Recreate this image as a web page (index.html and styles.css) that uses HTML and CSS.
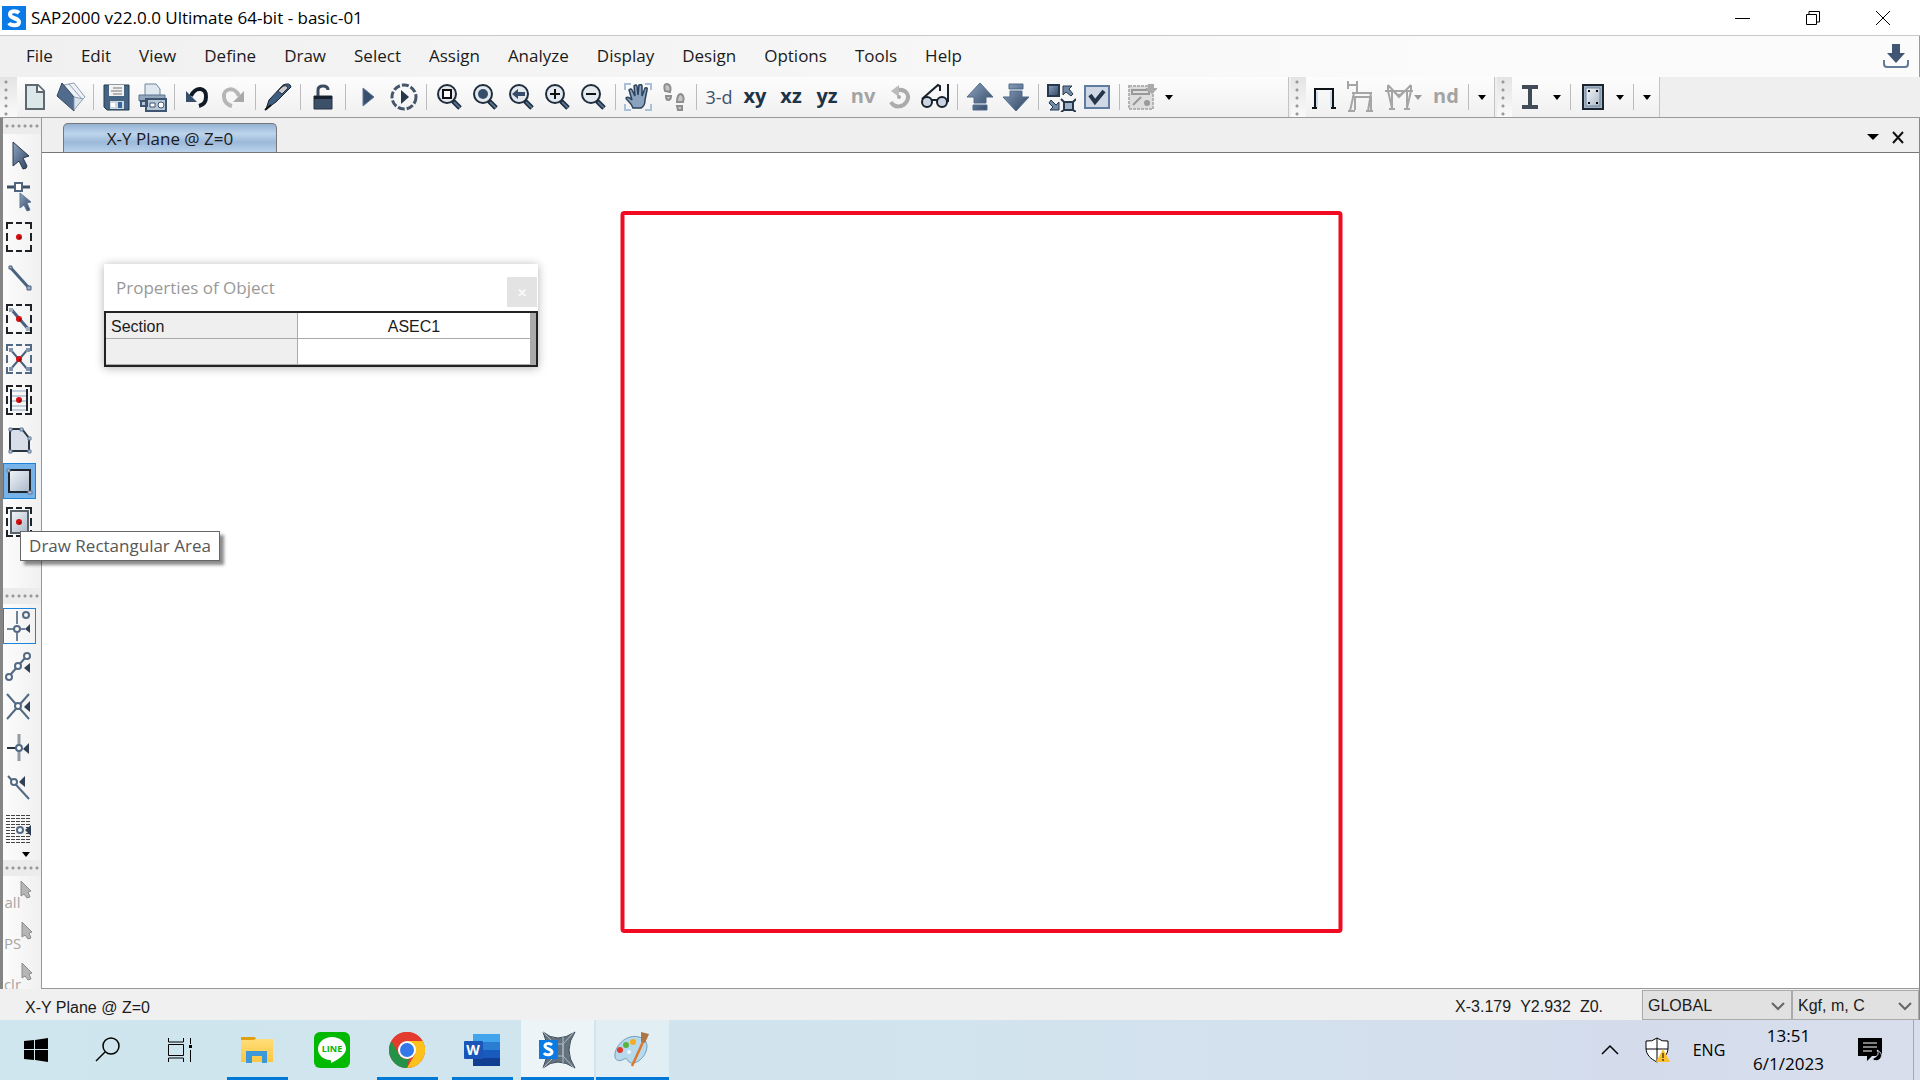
FILE: index.html
```
<!DOCTYPE html>
<html lang="en">
<head>
<meta charset="UTF-8">
<meta name="viewport" content="width=device-width, initial-scale=1.0">
<title>SAP2000 v22.0.0 Ultimate 64-bit - basic-01</title>
<link rel="stylesheet" href="styles.css">
</head>
<body>
<!-- shared shapes -->
<svg class="defs" aria-hidden="true">
    <defs>
        <linearGradient id="steel" x1="0" y1="0" x2="1" y2="1">
            <stop offset="0" stop-color="#8fa5c0"/><stop offset="1" stop-color="#2d4260"/>
        </linearGradient>
        <linearGradient id="pale" x1="0" y1="0" x2="1" y2="1">
            <stop offset="0" stop-color="#f3f6f9"/><stop offset="1" stop-color="#a9b7c9"/>
        </linearGradient>
        <linearGradient id="folder" x1="0" y1="0" x2="0" y2="1">
            <stop offset="0" stop-color="#ffdd78"/><stop offset="1" stop-color="#fbc740"/>
        </linearGradient>
    </defs>
    <symbol id="lens" viewBox="0 0 28 28">
        <path d="M18 18l7 7" stroke="#1b2a3c" stroke-width="5"/>
        <path d="M19 19l6 6" stroke="#56708f" stroke-width="2"/>
        <circle cx="12" cy="11" r="9" fill="#e3e9ef" stroke="#1f2c3c" stroke-width="2"/>
    </symbol>
    <symbol id="dashbox" viewBox="0 0 28 32">
        <path d="M2 8V2h6M11 2h6M20 2h6v6M26 12v8M26 24v6h-6M17 30h-6M8 30H2v-6M2 20v-8" fill="none" stroke="currentColor" stroke-width="2"/>
    </symbol>
    <symbol id="dot" viewBox="0 0 8 8">
        <circle cx="4" cy="4" r="3" fill="#d40d10"/><circle cx="5" cy="5" r="1" fill="#7d0000"/>
    </symbol>
    <symbol id="pick" viewBox="0 0 12 20">
        <path d="M1 1v15l3-2 3 4 3-1-2-5 3-1z" fill="#b5b5b5" stroke="#8c8c8c" stroke-width="1"/>
    </symbol>
</svg>

<header class="titlebar">
    <svg class="app-icon" viewBox="0 0 24 24"><rect width="24" height="24" fill="#0a7ae6"/><path d="M17 7C15 5 8 4 8 8.500S17 11.500 17 16 9 20 7 17" fill="none" stroke="#fff" stroke-width="4"/></svg>
    <h1>SAP2000 v22.0.0 Ultimate 64-bit - basic-01</h1>
    <div class="window-buttons">
        <button aria-label="Minimize"><svg width="16" height="16"><path d="M0 8.500h15" stroke="#000"/></svg></button>
        <button aria-label="Restore"><svg width="16" height="16" fill="none" stroke="#000"><path d="M1.500 4.500h10v10h-10zM4 4V1.500h10.500V12H12"/></svg></button>
        <button aria-label="Close"><svg width="16" height="16"><path d="M1 1l14 14M15 1L1 15" stroke="#000"/></svg></button>
    </div>
</header>

<nav class="menubar">
    <button>File</button>
    <button>Edit</button>
    <button>View</button>
    <button>Define</button>
    <button>Draw</button>
    <button>Select</button>
    <button>Assign</button>
    <button>Analyze</button>
    <button>Display</button>
    <button>Design</button>
    <button>Options</button>
    <button>Tools</button>
    <button>Help</button>
    <button class="download" aria-label="Download"><svg width="28" height="28"><path d="M10 2h8v9h5l-9 10-9-10h5z" fill="#405672"/><path d="M2 18v4q0 3 3 3h18q3 0 3-3v-4" fill="none" stroke="#627a98" stroke-width="2"/></svg></button>
</nav>

<div class="toolbars">
    <div class="toolbar main-tools">
        <span class="grip"></span>
        <button aria-label="New"><svg width="28" height="28"><path d="M5 2h12l6 6v18H5z" fill="#dce7e9" stroke="#5d6971" stroke-width="2"/><path d="M16 2v7h7" fill="#fff" stroke="#5d6971" stroke-width="2"/></svg></button>
        <button aria-label="Open"><svg width="30" height="30"><path d="M8 3l10-2 11 14-11 10z" fill="#eef2f6" stroke="#8e9fb3"/><path d="M13 2l13 15-9 8" fill="none" stroke="#8e9fb3"/><path d="M1 14L6 1l12 14v14z" fill="#506b8c" stroke="#33475f"/><path d="M18 15l9 2-9 11z" fill="#dbe3ec" stroke="#8e9fb3"/></svg></button>
        <span class="sep"></span>
        <button aria-label="Save"><svg width="28" height="28"><path d="M2 2h25v25H5l-3-3z" fill="#456484" stroke="#253a50"/><path d="M7 2h15v11H7z" fill="#f2f2f2"/><path d="M11 5h9M9 8h11M11 11h9" stroke="#777"/><path d="M8 18h14v8H8z" fill="#ced6de"/><path d="M16 19h4v6h-4z" fill="#38669a"/><path d="M9 20h4v4H9z" fill="#fff"/></svg></button>
        <button aria-label="Print"><svg width="30" height="30"><path d="M8 2h11l4 5v7H8z" fill="#dfe8f1" stroke="#70859e"/><path d="M2 13h26v6H2z" fill="#92a6bd" stroke="#5d738e"/><path d="M4 19h6v5H4zM9 17h20v12H9z" fill="#b7c6d5" stroke="#3d5570" stroke-width="2"/><path d="M13 21h5v4h-5z" fill="#fff" stroke="#3d5570"/><circle cx="24" cy="23" r="3" fill="#fff" stroke="#3d5570"/></svg></button>
        <span class="sep"></span>
        <button aria-label="Undo"><svg width="28" height="28"><path d="M8 13C12 3 24 4 23 14c0 5-3 8-7 9" fill="none" stroke="#101a26" stroke-width="4"/><path d="M3 8v11h11z" fill="#36506c"/></svg></button>
        <button aria-label="Redo" disabled><svg width="28" height="28"><path d="M20 13C16 3 4 5 5 14c0 5 4 8 8 9" fill="none" stroke="#b6b6b6" stroke-width="4"/><path d="M25 8v11H14z" fill="#a9a9a9"/></svg></button>
        <span class="sep"></span>
        <button aria-label="Refresh Window"><svg width="30" height="30"><path d="M3 27l3-9L20 3q7-3 8 2L13 20z" fill="#3f5d80" stroke="#182536"/><path d="M19 5q4-3 6 1l-6 6-4-3z" fill="#c9cdd3" stroke="#333"/><path d="M2 28l6-5" stroke="#111" stroke-width="2"/></svg></button>
        <span class="sep"></span>
        <button aria-label="Unlock Model"><svg width="28" height="28"><path d="M9 14V7q0-4 5-4t5 4" fill="none" stroke="#3c4c5f" stroke-width="3"/><path d="M5 13h18v13H5z" fill="#3c5069" stroke="#233143"/><path d="M5 13h18v3H5z" fill="#16212f"/></svg></button>
        <span class="sep"></span>
        <button aria-label="Run Analysis"><svg width="28" height="28"><path d="M9 5l11 9-11 9z" fill="#38506d" stroke="#5d7896"/></svg></button>
        <button aria-label="Run Options"><svg width="30" height="30"><circle cx="15" cy="15" r="12" fill="none" stroke="#46566a" stroke-width="3" stroke-dasharray="7 2"/><path d="M12 8l8 7-8 7z" fill="#26374c"/></svg></button>
        <span class="sep"></span>
        <button aria-label="Rubber Band Zoom"><svg width="28" height="28"><use href="#lens"/><path d="M8 7h8v8H8z" fill="#fff" stroke="#111" stroke-width="2"/></svg></button>
        <button aria-label="Restore Full View"><svg width="28" height="28"><use href="#lens"/><circle cx="12" cy="11" r="5" fill="#364e6b"/></svg></button>
        <button aria-label="Previous Zoom"><svg width="28" height="28"><use href="#lens"/><path d="M5 11l6-5v3h7v4h-7v3z" fill="#364e6b"/></svg></button>
        <button aria-label="Zoom In"><svg width="28" height="28"><use href="#lens"/><path d="M7 11h10M12 6v10" stroke="#111" stroke-width="2"/></svg></button>
        <button aria-label="Zoom Out"><svg width="28" height="28"><use href="#lens"/><path d="M7 11h10" stroke="#111" stroke-width="2"/></svg></button>
        <span class="sep"></span>
        <button aria-label="Pan"><svg width="30" height="30"><path d="M2 8V2h6M22 2h6v6M28 22v6h-6M8 28H2v-6" fill="none" stroke="#a9bfda" stroke-width="2"/><path d="M10 26C8 20 3 18 3 16q2-2 6 2L6 8q2-2 3 0l3 6-1-10q2-2 3 0l1 9 1-10q3-1 3 1v10l3-8q3-1 2 2l-2 10q0 6-4 8z" fill="#8ba2bf" stroke="#2d425c" stroke-width="1.500"/></svg></button>
        <button aria-label="Walk" disabled><svg width="28" height="30" fill="#c5c5c5" stroke="#8e8e8e" stroke-width="2"><path d="M5 9q-2-7 2-7 5 1 3 8zM6 14h5q0 4-3 4-2 0-2-4zM17 20q0-8 4-8 4 2 2 8zM17 24h5v4h-4z"/></svg></button>
        <span class="sep"></span>
        <button class="glyph thin">3-d</button>
        <button class="glyph">xy</button>
        <button class="glyph">xz</button>
        <button class="glyph">yz</button>
        <button class="glyph" disabled>nv</button>
        <button aria-label="Rotate 3D View" disabled><svg width="28" height="28"><path d="M13 7c8-1 12 5 9 11C18 25 9 25 6 19" fill="none" stroke="#ababab" stroke-width="4"/><path d="M6 8l8-6v12z" fill="#bbb"/><circle cx="14" cy="14" r="2" fill="#aaa"/></svg></button>
        <button aria-label="Perspective Toggle"><svg width="32" height="30" fill="none" stroke="#17202b" stroke-width="2"><path d="M3 17L19 3l2 1v5M29 2v18M13 18h5"/><circle cx="8" cy="20" r="5" fill="#c9d5e2"/><circle cx="23" cy="20" r="5" fill="#c9d5e2"/></svg></button>
        <span class="sep"></span>
        <button aria-label="Up One Gridline"><svg width="30" height="30" fill="url(#steel)" stroke="#506b8c"><path d="M15 1l13 14h-7v6H9v-6H2zM8 23h14v5H8z"/></svg></button>
        <button aria-label="Down One Gridline"><svg width="30" height="30" fill="url(#steel)" stroke="#506b8c"><path d="M15 29L2 15h7V9h12v6h7zM8 2h14v5H8z"/></svg></button>
        <span class="sep"></span>
        <button aria-label="Object Shrink Toggle"><svg width="30" height="30"><path d="M2 3h11v11H2z" fill="url(#steel)" stroke="#26384e" stroke-width="2"/><path d="M17 4h9l-3 3 4 5-2 2-5-4-3 3zM13 28H4l3-3-4-4 2-3 5 5 3-3z" fill="#7189a5" stroke="#26384e"/><path d="M18 20h9v8h-9z" fill="#9db1c8" stroke="#26384e" stroke-width="2"/><path d="M15 17l3 3M30 17l-3 3M15 30l3-2M30 30l-3-2" stroke="#26384e" stroke-width="2"/></svg></button>
        <button aria-label="Set Display Options"><svg width="28" height="28"><path d="M2 3h24v22H2z" fill="#cfd8e4" stroke="#5f7da1" stroke-width="2"/><path d="M7 12l5 7L21 8" fill="none" stroke="#25364a" stroke-width="4"/></svg></button>
        <span class="sep"></span>
        <button aria-label="Named Display" disabled><svg width="30" height="30"><path d="M2 4h24v23H2z" fill="#ddd" stroke="#b3b3b3" stroke-width="2" stroke-dasharray="3 1"/><path d="M5 8h17v4H5zM6 23l8-8" fill="none" stroke="#999" stroke-width="2"/><circle cx="20" cy="21" r="3" fill="#999"/><path d="M21 2h6v4h4l-6 6-7-6h3z" fill="#aaa"/></svg></button>
        <button class="drop" aria-label="More named displays"></button>
    </div>

    <div class="toolbar">
        <span class="grip"></span>
        <button aria-label="Frame"><svg width="30" height="28"><path d="M6 25V6h18v19M3 25h5M22 25h5" fill="none" stroke="#0d1218" stroke-width="2"/><path d="M8 8v16M22 8v16" stroke="#a9c3e0"/></svg></button>
        <button aria-label="Frame Loads" disabled><svg width="30" height="34" fill="none" stroke="#a5a5a5" stroke-width="2"><path d="M3 1v8M12 1v8M3 5h9M7 13h20M7 17h20M9 13L5 31M10 17v13M26 13l-3 18M26 17v14M3 31h7M21 31h7M12 9v4"/></svg></button>
        <button class="wide" aria-label="Frame Forces" disabled><svg width="30" height="28" fill="none" stroke="#a5a5a5" stroke-width="2"><path d="M1 8h28M4 2l11 12L27 2M4 2v6l4 17M8 8v17M27 2v6l-4 17M23 8v17M5 26h6M20 26h6M11 9q4 6 8 0"/></svg><i class="caret grey"></i></button>
        <button class="glyph" disabled>nd</button>
        <span class="sep"></span>
        <button class="drop" aria-label="More display tools"></button>
    </div>

    <div class="toolbar">
        <span class="grip"></span>
        <button aria-label="Steel Frame Design"><svg width="24" height="28"><path d="M4 2h16v4h-6v16h6v4H4v-4h6V6H4z" fill="#414c58"/></svg></button>
        <button class="drop" aria-label="More steel design"></button>
        <span class="sep"></span>
        <button aria-label="Concrete Frame Design"><svg width="26" height="28"><path d="M3 2h20v24H3z" fill="#a3b3c7" stroke="#1c242d" stroke-width="2"/><path d="M6 5h14v18H6z" fill="url(#pale)" stroke="#71839a"/><path d="M8 7h2v2H8zM16 7h2v2h-2zM8 19h2v2H8zM16 19h2v2h-2z"/></svg></button>
        <button class="drop" aria-label="More concrete design"></button>
        <span class="sep"></span>
        <button class="drop" aria-label="Toolbar options"></button>
    </div>
</div>

<main class="workspace">
    <aside class="side-tools">
        <div class="group draw-group">
            <span class="hgrip"></span>
            <div class="cells">
                <button aria-label="Select Object"><svg width="28" height="32"><path d="M8 2v24l6-5 4 8q4 0 4-3l-4-8 6-2z" fill="url(#steel)" stroke="#28384c"/></svg></button>
                <button aria-label="Reshape Object"><svg width="28" height="32"><path d="M2 6h23" stroke="#3d5067" stroke-width="3"/><path d="M10 2h7v8h-7z" fill="#fff" stroke="#506580" stroke-width="2"/><path d="M15 12v15l4-3 3 6 3-1-3-7 4-1z" fill="url(#steel)" stroke="#607994"/></svg></button>
                <button aria-label="Draw Special Joint"><svg width="28" height="32"><use href="#dashbox"/><use href="#dot" x="10" y="12" width="8" height="8"/></svg></button>
                <button aria-label="Draw Frame"><svg width="28" height="32"><path d="M5 5l19 21" stroke="#4a6280" stroke-width="3"/><path d="M4 4h3v3H4zM22 24h4v4h-4z" fill="#9eafc2" stroke="#4a6280"/></svg></button>
                <button aria-label="Quick Draw Frame"><svg width="28" height="32"><use href="#dashbox"/><path d="M6 6l18 21" stroke="#4a6280" stroke-width="3"/><path d="M4 5h4v4H4zM21 24h4v4h-4z" fill="#9eafc2"/><use href="#dot" x="10" y="12" width="8" height="8"/></svg></button>
                <button class="blue" aria-label="Quick Draw Braces"><svg width="28" height="32"><use href="#dashbox"/><path d="M5 6l18 21M23 6L5 27" stroke="#4a6280" stroke-width="2"/><path d="M4 5h4v4H4zM21 5h4v4h-4zM4 24h4v4H4zM21 24h4v4h-4z" fill="#7f94ad"/><use href="#dot" x="10" y="12" width="8" height="8"/></svg></button>
                <button aria-label="Quick Draw Secondary Beams"><svg width="28" height="32"><use href="#dashbox"/><path d="M7 7h14M7 12h14M7 17h14M7 22h14M7 26h14" stroke="#8aa3c2"/><path d="M6 5v22M22 5v22" stroke="#1b232c" stroke-width="2"/><use href="#dot" x="10" y="12" width="8" height="8"/></svg></button>
                <button aria-label="Draw Poly Area"><svg width="28" height="32"><path d="M5 5h12l7 9v13H5z" fill="#d8dfe9" stroke="#2a3542" stroke-width="2"/><path d="M4 4h3v3H4zM15 4h3v3h-3zM23 13h3v3h-3zM4 26h3v3H4zM23 26h3v3h-3z" fill="#b5c4d5" stroke="#627a96"/></svg></button>
                <button class="active" aria-label="Draw Rectangular Area"><svg width="28" height="32"><path d="M4 5h21v22H4z" fill="url(#pale)" stroke="#20262e" stroke-width="2"/><path d="M2 4h3v3H2zM23 26h4v3h-4z" fill="#b5c4d5" stroke="#627a96"/></svg></button>
                <button aria-label="Quick Draw Area"><svg width="28" height="32"><use href="#dashbox"/><path d="M6 5h17v22H6z" fill="url(#pale)" stroke="#59616b" stroke-width="2"/><use href="#dot" x="10" y="12" width="8" height="8"/></svg></button>
            </div>
        </div>
        <div class="group">
            <span class="hgrip"></span>
            <div class="cells snap-cells">
                <button class="checked" aria-label="Snap to Points"><svg width="28" height="32" fill="none" stroke="#536a85" stroke-width="2"><path d="M12 1v13M12 23v8M2 19h7M16 19h4" stroke="#718297"/><circle cx="12" cy="19" r="3"/><ellipse cx="21" cy="5" rx="3" ry="3"/><path d="M25 14v9l-5-4z" fill="#2f4055" stroke="none"/></svg></button>
                <button aria-label="Snap to Ends"><svg width="28" height="32" fill="none" stroke="#536a85" stroke-width="2"><path d="M6 23l14-16"/><g fill="#fff"><ellipse cx="22" cy="5" rx="3" ry="3"/><ellipse cx="13" cy="15" rx="3" ry="3"/><ellipse cx="4" cy="26" rx="3" ry="3"/></g><path d="M25 12v10l-6-5z" fill="#2f4055" stroke="none"/></svg></button>
                <button aria-label="Snap to Intersections"><svg width="28" height="32" fill="none" stroke="#536a85" stroke-width="2"><path d="M2 3l22 25M24 3L2 28"/><ellipse cx="13" cy="15" rx="3" ry="3" fill="#fff"/><path d="M25 10v11l-6-5z" fill="#2f4055" stroke="none"/></svg></button>
                <button aria-label="Snap to Perpendicular"><svg width="28" height="32" fill="none"><path d="M14 2v27" stroke="#929aa4" stroke-width="3"/><path d="M2 16h12" stroke="#26323f" stroke-width="2"/><ellipse cx="14" cy="16" rx="3" ry="3" fill="#fff" stroke="#536a85" stroke-width="2"/><path d="M24 11v11l-6-5z" fill="#2f4055"/></svg></button>
                <button aria-label="Snap to Lines"><svg width="28" height="32" fill="none" stroke="#536a85" stroke-width="2"><path d="M3 4l21 23"/><circle cx="9" cy="10" r="3" fill="#fff"/><path d="M20 4v11l-6-5z" fill="#2f4055" stroke="none"/></svg></button>
                <button aria-label="Snap to Fine Grid"><svg width="28" height="32"><path d="M1 2.500h25M1 5.500h25M1 8.500h25M1 11.500h25M1 14.500h25M1 17.500h25M1 20.500h25M1 23.500h25M1 26.500h25M1 29.500h25" stroke="#444" stroke-dasharray="4 1"/><path d="M11 13h10v8H11z" fill="#eee"/><ellipse cx="15" cy="17" rx="3" ry="3" fill="#fff" stroke="#536a85" stroke-width="2"/><path d="M26 12v11l-6-6z" fill="#2f4055"/></svg></button>
            </div>
            <button class="more" aria-label="More snap tools"><i class="caret"></i></button>
        </div>
        <div class="group">
            <span class="hgrip"></span>
            <div class="cells select-cells">
                <button disabled><span>all</span><svg width="12" height="20"><use href="#pick"/></svg></button>
                <button disabled><span>PS</span><svg width="12" height="20"><use href="#pick"/></svg></button>
                <button disabled><span>clr</span><svg width="12" height="20"><use href="#pick"/></svg></button>
            </div>
        </div>
    </aside>

    <section class="view">
        <div class="tabs">
            <button class="tab">X-Y Plane @ Z=0</button>
            <button class="tab-menu" aria-label="Window list"><i class="caret big"></i></button>
            <button class="tab-close" aria-label="Close window"><svg width="16" height="16"><path d="M3 3l10 11M13 3L3 14" stroke="#111" stroke-width="2"/></svg></button>
        </div>
        <div class="canvas">
            <svg class="model" viewBox="0 0 1876 835"><rect x="580" y="60" width="718" height="718" rx="2" fill="none" stroke="#f00a22" stroke-width="4"/></svg>
            <div class="properties">
                <div class="properties-head">
                    <h2>Properties of Object</h2>
                    <button aria-label="Close properties">×</button>
                </div>
                <table>
                    <tr><th scope="row">Section</th><td>ASEC1</td></tr>
                    <tr><th></th><td></td></tr>
                </table>
            </div>
        </div>
    </section>
    <div class="tooltip" role="tooltip">Draw Rectangular Area</div>
</main>

<footer class="statusbar">
    <span class="status-view">X-Y Plane @ Z=0</span>
    <span class="coords"><span>X-3.179</span><span>Y2.932</span><span>Z0.</span></span>
    <div class="picker coord-system">
        <select aria-label="Coordinate system"><option>GLOBAL</option></select>
        <svg width="14" height="10"><path d="M1 2l6 6 6-6" fill="none" stroke="#666" stroke-width="2"/></svg>
    </div>
    <div class="picker units">
        <select aria-label="Units"><option>Kgf, m, C</option></select>
        <svg width="14" height="10"><path d="M1 2l6 6 6-6" fill="none" stroke="#666" stroke-width="2"/></svg>
    </div>
</footer>

<div class="taskbar">
    <button aria-label="Start"><svg width="24" height="24"><path d="M0 3l10-1v9H0zM11 2l13-2v11H11zM0 12h10v10L0 21zM11 12h13v12l-13-2z"/></svg></button>
    <button aria-label="Search"><svg width="26" height="26" fill="none" stroke="#000" stroke-width="1.500"><circle cx="16" cy="9" r="8"/><path d="M10 15L1 24"/></svg></button>
    <button aria-label="Task View"><svg width="26" height="26" fill="none" stroke="#000"><path d="M1.500 1v4h15V1M1.500 7.500h15v11h-15zM1.500 25v-4h15v4M23.500 1v6M23.500 13v12"/><path d="M22 8h3v3h-3z" fill="#000" stroke="none"/></svg></button>
    <div class="apps">
        <button class="open" aria-label="File Explorer"><svg width="36" height="36"><path d="M2 5h14l2 4H2z" fill="#e0a012"/><path d="M2 8h12l3-1h17v23H2z" fill="url(#folder)"/><path d="M7 19h21v12h-5v-7H13v7H7z" fill="#3e97d9"/></svg></button>
        <button aria-label="LINE"><svg width="36" height="36"><rect width="36" height="36" rx="6" fill="#00b900"/><path d="M18 5C10 5 4 10 4 17c0 6 5 10 11 11 3 0 2 2 2 3 5-2 15-8 15-14C32 10 26 5 18 5z" fill="#fff"/><text x="18" y="20" class="line-text">LINE</text></svg></button>
        <button class="open" aria-label="Google Chrome"><svg width="36" height="36"><circle cx="18" cy="18" r="18" fill="#e33b2e"/><path d="M18 9h15.600A18 18 0 0 1 18 36l8-14z" fill="#fcc21b"/><path d="M2.400 9L10 22.500Q14 28 20 27l-2 9A18 18 0 0 1 2.400 9z" fill="#259347"/><path d="M2.400 9A18 18 0 0 1 33.600 9H18z" fill="#e33b2e"/><circle cx="18" cy="18" r="9" fill="#fff"/><circle cx="18" cy="18" r="7" fill="#3479ea"/></svg></button>
        <button class="open" aria-label="Word"><svg width="36" height="36"><path d="M9 2h27v8H9z" fill="#41a5ee"/><path d="M9 10h27v8H9z" fill="#2b7cd3"/><path d="M9 18h27v8H9z" fill="#185abd"/><path d="M9 26h27v8H9z" fill="#103f91"/><rect y="9" width="19" height="18" rx="1" fill="#1a55b8"/><text x="9" y="23" class="word-text">W</text></svg></button>
        <button class="open selected" aria-label="SAP2000"><svg width="38" height="38"><path d="M5 1q14 12 32 0-12 18 0 36-18-12-32 0 8-18 0-36z" fill="#64727e" stroke="#3c4a56"/><path d="M5 1l12 12M36 1L25 13M36 37L25 25M5 37l12-12M17 13h8v12h-8zM25 6v26" fill="none" stroke="#aebbc4"/><rect x="1" y="9" width="19" height="19" fill="#0a7ae6"/><path d="M14 14C12 12 7 12 7 15s7 3 7 6-6 4-8 1" fill="none" stroke="#fff" stroke-width="3"/></svg></button>
        <button class="open paint" aria-label="Paint"><svg width="38" height="38"><path d="M17 6C7 9 1 19 2 26c1 5 6 4 9 2 4-2 3 4 8 4 8 0 15-9 15-17C34 7 24 4 17 6z" fill="#b6d9ed" stroke="#759db7"/><circle cx="16" cy="21" r="2" fill="#edf5fb"/><circle cx="7" cy="19" r="3" fill="#df3e2f"/><circle cx="13" cy="14" r="3" fill="#59b33e"/><circle cx="20" cy="11" r="3" fill="#f5ab22"/><path d="M30 11L19 35" stroke="#d9792e" stroke-width="2.500"/><path d="M28 1l8 2-4 9-4-1z" fill="#ae7545"/></svg></button>
    </div>
    <div class="tray">
        <button aria-label="Show hidden icons"><svg width="18" height="12"><path d="M1 10l8-8 8 8" fill="none" stroke="#000" stroke-width="1.500"/></svg></button>
        <button aria-label="Windows Security"><svg width="26" height="26"><path d="M12 1q5 4 11 3v7c0 7-5 11-11 14C6 22 1 18 1 11V4q6 1 11-3z" fill="#fff" stroke="#000"/><path d="M12 1v23M1 12h22" stroke="#000"/><path d="M18 12l7 13H11z" fill="#fdbf2d"/><path d="M18 16v5M18 22v2" stroke="#000"/></svg></button>
        <button class="lang">ENG</button>
        <button class="clock"><time>13:51</time><time>6/1/2023</time></button>
        <button class="notes" aria-label="Notifications"><svg width="26" height="26"><path d="M0 1h24v18H14l-5 5v-5H0z"/><path d="M5 6h14M5 10h14M5 14h9" stroke="#fff"/><path d="M19 13q4 5-5 9 5 4 9-1 2-5-4-8z" fill="#000" stroke="#d6dcea"/></svg></button>
        <button class="desktop" aria-label="Show desktop"></button>
    </div>
</div>
</body>
</html>
```
FILE: styles.css
```
* {
    box-sizing: border-box;
}

body {
    margin: 0;
    height: 100vh;
    display: flex;
    flex-direction: column;
    overflow: hidden;
    font-family: "Open Sans", "Noto Sans", sans-serif;
    font-size: 17px;
    color: #1b1b1b;
    background: #efefef;
}

button {
    padding: 0;
    border: none;
    background: none;
    font: inherit;
    color: inherit;
    display: flex;
    align-items: center;
    justify-content: center;
}

svg {
    display: block;
    flex: none;
}

.defs {
    position: absolute;
    width: 0;
    height: 0;
}

/* title bar */
.titlebar {
    height: 36px;
    flex: none;
    display: flex;
    align-items: center;
    padding: 0 2px;
    background: #fff;
    border-bottom: 1px solid #c8c8c8;
}

.app-icon {
    width: 24px;
    height: 24px;
}

h1 {
    margin: 0 auto 0 5px;
    font-size: 17px;
    font-weight: 400;
    color: #000;
}

.window-buttons {
    display: flex;
}

.window-buttons button {
    width: 70px;
    height: 34px;
}

/* menu */
.menubar {
    height: 41px;
    flex: none;
    display: flex;
    align-items: center;
    gap: 28px;
    padding: 0 9px 2px 26px;
    background: linear-gradient(90deg, #f0f0f0, #fbfbfb 80%);
    border-right: 1px solid #999;
}

.download {
    margin-left: auto;
}

/* toolbars */
.toolbars {
    height: 41px;
    flex: none;
    display: flex;
    gap: 2px;
    border-bottom: 1px solid #999;
}

.toolbar {
    display: flex;
    align-items: center;
    padding-right: 3px;
    background: linear-gradient(#fdfdfd, #f0f0f0);
    border-right: 1px solid #c4c4c4;
}

.main-tools {
    width: 1289px;
}

.toolbar button {
    width: 36px;
    height: 36px;
}

.toolbar .wide {
    width: 50px;
}

.toolbar .drop {
    width: 18px;
}

.grip {
    width: 15px;
    height: 40px;
    background: radial-gradient(circle at 6px 5px, #999 1px, transparent 2px) 0 0 / 17px 8px, linear-gradient(#e4e4e4, #fafafa);
}

.main-tools .grip {
    width: 17px;
}

.sep {
    width: 1px;
    height: 26px;
    margin: 0 4px;
    background: #bcbcbc;
}

.drop::after,
.caret {
    content: "";
    border: 4px solid transparent;
    border-top: 5px solid #000;
    border-bottom: 0;
}

.caret.grey {
    border-top-color: #999;
}

.caret.big {
    border-width: 6px 6px 0;
}

.toolbar .glyph {
    padding-bottom: 3px;
    font-size: 20px;
    font-weight: 700;
    color: #1d3346;
}

.toolbar .thin {
    font-size: 18px;
    font-weight: 400;
    padding: 0;
    color: #40526a;
}

.toolbar .glyph:disabled {
    color: #a3a3a3;
}

/* working area */
.workspace {
    flex: 1;
    min-height: 0;
    display: flex;
    position: relative;
    border-right: 1px solid #888;
}

.side-tools {
    width: 41px;
    flex: none;
    overflow: hidden;
    border-left: 3px solid #858585;
    background: linear-gradient(90deg, #fcfcfc, #f0f0f0);
}

.hgrip {
    display: block;
    height: 16px;
    background: radial-gradient(circle at 4px 8px, #999 1px, transparent 2px) 0 0 / 6px 16px, #ececec;
}

.cells {
    height: 406px;
    margin-top: 2px;
    display: grid;
    grid-auto-rows: 1fr;
}

.draw-group {
    height: 470px;
}

.snap-cells {
    height: 243px;
}

.select-cells {
    height: 122px;
}

.cells button {
    width: 33px;
    height: 36px;
    padding-right: 2px;
    align-self: center;
    color: #1e2227;
}

.cells .blue {
    color: #506884;
}

.cells .active {
    background: #77b3e8;
    border: 1px solid #1b83dc;
}

.cells .checked {
    border: 1px solid #1b83dc;
}

.more {
    width: 33px;
    height: 11px;
    padding-left: 12px;
}

.select-cells button {
    align-items: flex-start;
    font-size: 15px;
    color: #a6a6a6;
}

.select-cells span {
    padding-top: 12px;
}

/* document view */
.view {
    flex: 1;
    min-width: 0;
    display: flex;
    flex-direction: column;
    border-left: 1px solid #999;
}

.tabs {
    height: 35px;
    flex: none;
    display: flex;
    align-items: flex-end;
    padding: 0 12px 0 21px;
    border-bottom: 1px solid #777;
}

.tab {
    width: 214px;
    height: 29px;
    border: 1px solid #777;
    border-bottom: 0;
    border-radius: 5px 5px 0 0;
    background: linear-gradient(#94b2d4, #bdd4ec 35%, #9cb9d9 65%, #bad2eb);
}

.tab-menu {
    margin-left: auto;
}

.tab-menu,
.tab-close {
    width: 25px;
    height: 30px;
}

.tab-close {
    width: 18px;
    margin-left: 4px;
}

.canvas {
    flex: 1;
    min-height: 0;
    position: relative;
    background: #fff;
    border-bottom: 1px solid #999;
}

.model {
    width: 100%;
    height: 100%;
}

/* floating windows over the drawing */
.properties {
    position: absolute;
    left: 62px;
    top: 111px;
    width: 434px;
    background: #fff;
    box-shadow: 0 1px 9px rgba(0, 0, 0, 0.3);
}

.properties-head {
    height: 47px;
    display: flex;
    align-items: center;
    justify-content: space-between;
    padding: 0 1px 0 12px;
}

h2 {
    margin: 0;
    font-size: 17px;
    font-weight: 400;
    color: #999;
}

.properties-head button {
    width: 30px;
    height: 30px;
    margin-top: 9px;
    background: #e3e3e3;
    color: #f8f8f8;
    font-weight: 700;
}

.properties table {
    width: 100%;
    height: 56px;
    border-collapse: separate;
    border-spacing: 0;
    border: 2px solid #222;
    font: 16px "Liberation Sans", sans-serif;
}

.properties th,
.properties td {
    height: 26px;
    padding: 2px 5px 0;
    border-right: 1px solid #aaa;
    border-bottom: 1px solid #aaa;
    font-weight: 400;
}

.properties th {
    width: 192px;
    text-align: left;
    background: #efefef;
}

.properties td {
    text-align: center;
    border-right: 6px solid #aaa;
}

.tooltip {
    position: absolute;
    left: 20px;
    top: 413px;
    height: 30px;
    width: 200px;
    line-height: 28px;
    text-align: center;
    background: #fff;
    border: 1px solid #666;
    box-shadow: 4px 4px 3px rgba(0, 0, 0, 0.45);
    color: #575757;
}

/* status */
.statusbar {
    height: 31px;
    flex: none;
    display: flex;
    align-items: center;
    background: #f0f0f0;
    border-right: 1px solid #888;
    font: 16px "Liberation Sans", sans-serif;
}

.status-view {
    margin: 7px auto 0 25px;
}

.coords {
    display: flex;
    gap: 9px;
    margin: 4px 39px 0 0;
}

.picker {
    width: 150px;
    height: 30px;
    position: relative;
    border: 1px solid #aaa;
    background: #e1e1e1;
}

.units {
    width: 127px;
}

.picker select {
    appearance: none;
    width: 100%;
    height: 28px;
    padding: 2px 5px 0;
    border: none;
    background: none;
    font: inherit;
    color: #1b1b1b;
}

.picker svg {
    position: absolute;
    right: 6px;
    top: 10px;
}

/* taskbar */
.taskbar {
    height: 60px;
    flex: none;
    display: flex;
    background: linear-gradient(90deg, #cfe6ee, #d2e4ee 50%, #d4dcec 85%, #d8deeb);
    color: #000;
}

.taskbar > button {
    width: 72px;
}

.apps {
    display: flex;
    gap: 2px;
    padding-left: 5px;
}

.apps button {
    width: 73px;
    padding-right: 2px;
    position: relative;
}

.apps .open::after {
    content: "";
    position: absolute;
    left: 6px;
    right: 6px;
    bottom: 0;
    height: 3px;
    background: #0078d7;
}

.apps .selected {
    background: #ecf4f8;
}

.apps .paint {
    background: #e1eef4;
}

.apps .selected::after,
.apps .paint::after {
    left: 0;
    right: 0;
}

.line-text {
    font: 700 9px "Open Sans", sans-serif;
    text-anchor: middle;
    fill: #00b900;
}

.word-text {
    font: 700 14px "Open Sans", sans-serif;
    text-anchor: middle;
    fill: #fff;
}

.tray {
    margin-left: auto;
    display: flex;
}

.tray button {
    width: 48px;
}

.tray .lang {
    width: 54px;
    font-size: 16px;
}

.tray .clock {
    width: 105px;
    flex-direction: column;
    line-height: 28px;
}

.tray .notes {
    width: 72px;
    padding-right: 12px;
}

.tray .desktop {
    width: 7px;
    border-left: 1px solid #9ca9b8;
}
```
